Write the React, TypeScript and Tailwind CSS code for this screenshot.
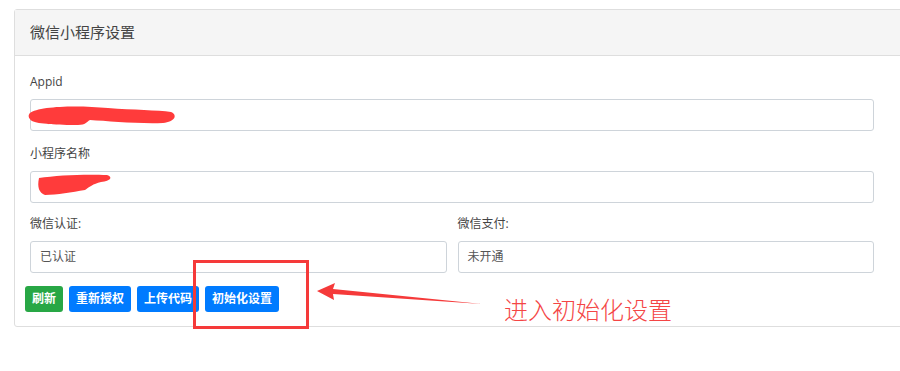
import React from 'react';

const font = { fontFamily: '"Open Sans", "Noto Sans CJK SC", sans-serif' };

function Field({ label, value, children }: { label: string; value?: string; children?: React.ReactNode }) {
  return (
    <div>
      <label className="block text-[12px] leading-[18px] text-[#444] mb-[8px]">{label}</label>
      <div className="relative h-[32px] rounded-[3px] border border-[#ced4da] bg-white px-[9px] flex items-center text-[12px] text-[#555]">
        {value}
        {children}
      </div>
    </div>
  );
}

export default function App() {
  return (
    <div className="relative w-[900px] h-[371px] overflow-hidden bg-white" style={font}>
      <div className="ml-[14px] mt-[9px] w-[900px] border border-[#dedede] rounded-[3px]">
        <div className="h-[46px] bg-[#f5f5f5] border-b border-[#dedede] px-[15px] flex items-center text-[15px] text-[#444]">
          微信小程序设置
        </div>
        <div className="pl-[15px] pt-[17px] pb-[14px] w-[859px] flex flex-col">
          <Field label="Appid">
            <svg className="absolute left-[-3px] top-[3px]" width="150" height="24" viewBox="0 0 150 24">
              <path d="M2 10 C10 3 50 2 80 5 C105 7 130 7 143 9 C150 12 147 19 135 20 C110 21 80 18 62 17 C58 19 58 22 50 22 C30 22 10 21 4 18 C0 15 0 12 2 10 Z" fill="#ff3b3b" />
            </svg>
          </Field>
          <div className="mt-[14px]">
            <Field label="小程序名称">
              <svg className="absolute left-[6px] top-[1px]" width="76" height="24" viewBox="0 0 76 24">
                <path d="M2 5 C20 2 50 1 70 2 C76 4 74 8 64 9 C56 11 52 14 48 17 C35 19 20 22 8 22 C2 20 0 14 2 5 Z" fill="#ff3b3b" />
              </svg>
            </Field>
          </div>
          <div className="mt-[12px] grid grid-cols-2 gap-[11px]">
            <Field label="微信认证:" value="已认证" />
            <Field label="微信支付:" value="未开通" />
          </div>
          <div className="mt-[13px] ml-[-5px] flex gap-[6px] text-[12px] font-semibold text-white">
            <button className="h-[26px] px-[7px] rounded-[3px] bg-[#28a745]">刷新</button>
            <button className="h-[26px] px-[7px] rounded-[3px] bg-[#007bff]">重新授权</button>
            <button className="h-[26px] px-[7px] rounded-[3px] bg-[#007bff]">上传代码</button>
            <button className="h-[26px] px-[7px] rounded-[3px] bg-[#007bff]">初始化设置</button>
          </div>
        </div>
      </div>

      <div className="absolute left-[193px] top-[260px] w-[116px] h-[69px] border-[3px] border-[#f53a3a]" />
      <svg className="absolute left-0 top-0 pointer-events-none" width="900" height="371">
        <path d="M317 291 L335 283 L333 289 L482 304 L333 294 L334 300 Z" fill="#f53a3a" />
      </svg>
      <div className="absolute left-[504px] top-[294px] text-[24px] leading-[30px] font-light text-[#f44545]" style={{ fontFamily: '"Noto Sans CJK SC", sans-serif' }}>
        进入初始化设置
      </div>
    </div>
  );
}
